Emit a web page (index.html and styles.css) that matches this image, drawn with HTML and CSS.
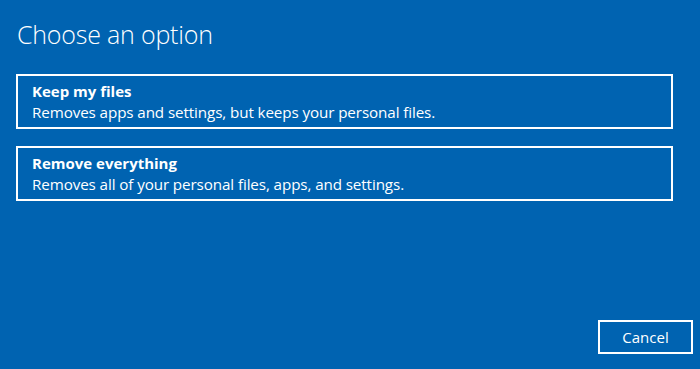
FILE: index.html
```html
<!DOCTYPE html>
<html>
<head>
<meta charset="utf-8">
<link rel="stylesheet" href="styles.css">
</head>
<body>
<div class="page">
  <h1 class="title">Choose an option</h1>
  <div class="options">
    <div class="option">
      <div class="opt-title">Keep my files</div>
      <div class="opt-desc">Removes apps and settings, but keeps your personal files.</div>
    </div>
    <div class="option">
      <div class="opt-title">Remove everything</div>
      <div class="opt-desc">Removes all of your personal files, apps, and settings.</div>
    </div>
  </div>
  <div class="footer">
    <button class="cancel">Cancel</button>
  </div>
</div>
</body>
</html>
```
FILE: styles.css
```css
html, body {
  margin: 0;
  padding: 0;
  height: 100%;
  background: #0063b1;
}
.page {
  box-sizing: border-box;
  height: 369px;
  padding: 17px 27px 15px 16px;
  display: flex;
  flex-direction: column;
  font-family: "Open Sans", "Noto Sans", sans-serif;
  color: #fff;
}
.title {
  margin: 0 0 0 1px;
  font-weight: 300;
  font-size: 25px;
  line-height: 34px;
  letter-spacing: -0.2px;
}
.options {
  margin-top: 23px;
  display: flex;
  flex-direction: column;
  gap: 17px;
}
.option {
  border: 2px solid #fff;
  height: 55px;
  box-sizing: border-box;
  padding: 5px 14px;
}
.opt-title {
  font-weight: 700;
  font-size: 15px;
  line-height: 21px;
}
.opt-desc {
  font-size: 15.2px;
  line-height: 20px;
  letter-spacing: -0.1px;
}
.footer {
  margin-top: auto;
  display: flex;
  justify-content: flex-end;
  margin-right: -20px;
}
.cancel {
  width: 95px;
  height: 34px;
  background: transparent;
  border: 2px solid #fff;
  color: #fff;
  font-family: "Open Sans", "Noto Sans", sans-serif;
  font-size: 15px;
  padding: 0;
}
```
